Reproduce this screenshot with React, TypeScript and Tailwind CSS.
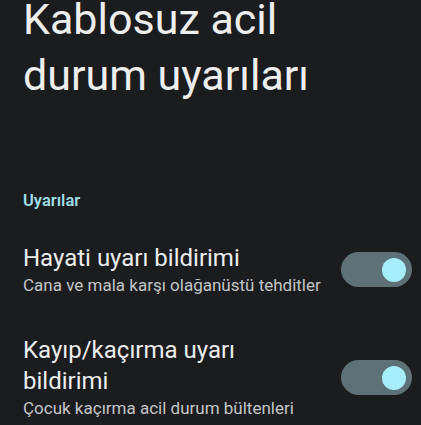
import React, { useState } from 'react';

function Toggle({ on, onChange }: { on: boolean; onChange: () => void }) {
  return (
    <button
      onClick={onChange}
      className={`relative shrink-0 w-[71px] h-[35px] rounded-full transition ${on ? 'bg-[#5d7177]' : 'bg-[#3a3d40]'}`}
    >
      <span
        className={`absolute top-[6px] w-[24px] h-[24px] rounded-full transition-all ${on ? 'left-[41px] bg-[#a6eefc]' : 'left-[6px] bg-[#8e9193]'}`}
      />
    </button>
  );
}

export default function App() {
  const [lifeAlert, setLifeAlert] = useState(true);
  const [amberAlert, setAmberAlert] = useState(true);

  const items = [
    { title: 'Hayati uyarı bildirimi', desc: 'Cana ve mala karşı olağanüstü tehditler', on: lifeAlert, toggle: () => setLifeAlert(!lifeAlert), mt: 'mt-[32px]' },
    { title: 'Kayıp/kaçırma uyarı bildirimi', desc: 'Çocuk kaçırma acil durum bültenleri', on: amberAlert, toggle: () => setAmberAlert(!amberAlert), mt: 'mt-[39px]' },
  ];

  return (
    <div className="w-[421px] h-[425px] overflow-hidden bg-[#1b1c1e] pl-[23px] pr-[9px] font-['Roboto','Noto_Sans',sans-serif]">
      <h1 className="-mt-[9px] text-[43px] leading-[56px] text-[#eeeeee] font-normal">
        Kablosuz acil
        <br />
        durum uyarıları
      </h1>

      <p className="mt-[88px] text-[16.5px] leading-[20px] font-semibold text-[#9fdde8]">Uyarılar</p>

      {items.map((item) => (
        <div key={item.title} className={`${item.mt} flex items-center gap-[12px]`}>
          <div className="flex-1">
            <p className="pr-[16px] text-[24px] leading-[31px] text-[#eceeee]">{item.title}</p>
            <p className="text-[17px] leading-[22px] text-[#c3c6c6]">{item.desc}</p>
          </div>
          <Toggle on={item.on} onChange={item.toggle} />
        </div>
      ))}
    </div>
  );
}
